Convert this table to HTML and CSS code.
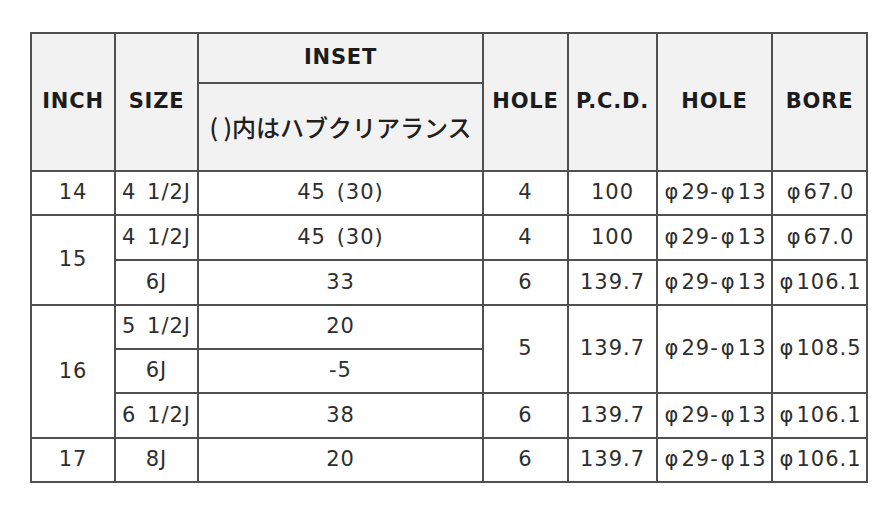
FILE: index.html
```html
<!DOCTYPE html>
<html lang="ja">
<head>
<meta charset="utf-8">
<title>Wheel size table</title>
<link rel="stylesheet" href="styles.css">
</head>
<body>
<div class="wrap">
<table class="spec">
  <colgroup>
    <col class="c-inch"><col class="c-size"><col class="c-inset"><col class="c-hole"><col class="c-pcd"><col class="c-hole2"><col class="c-bore">
  </colgroup>
  <thead>
    <tr class="h1">
      <th rowspan="2">INCH</th>
      <th rowspan="2">SIZE</th>
      <th>INSET</th>
      <th rowspan="2">HOLE</th>
      <th rowspan="2">P.C.D.</th>
      <th rowspan="2">HOLE</th>
      <th rowspan="2">BORE</th>
    </tr>
    <tr class="h2">
      <th class="jp">( )内はハブクリアランス</th>
    </tr>
  </thead>
  <tbody>
    <tr class="r44">
      <td>14</td><td>4 1/2J</td><td>45 (30)</td><td>4</td><td>100</td><td><span class="phi">φ</span>29-<span class="phi">φ</span>13</td><td><span class="phi">φ</span>67.0</td>
    </tr>
    <tr class="r45">
      <td rowspan="2">15</td><td>4 1/2J</td><td>45 (30)</td><td>4</td><td>100</td><td><span class="phi">φ</span>29-<span class="phi">φ</span>13</td><td><span class="phi">φ</span>67.0</td>
    </tr>
    <tr class="r45">
      <td>6J</td><td>33</td><td>6</td><td>139.7</td><td><span class="phi">φ</span>29-<span class="phi">φ</span>13</td><td><span class="phi">φ</span>106.1</td>
    </tr>
    <tr class="r44">
      <td rowspan="3">16</td><td>5 1/2J</td><td>20</td><td rowspan="2">5</td><td rowspan="2">139.7</td><td rowspan="2"><span class="phi">φ</span>29-<span class="phi">φ</span>13</td><td rowspan="2"><span class="phi">φ</span>108.5</td>
    </tr>
    <tr class="r44">
      <td>6J</td><td>-5</td>
    </tr>
    <tr class="r45">
      <td>6 1/2J</td><td>38</td><td>6</td><td>139.7</td><td><span class="phi">φ</span>29-<span class="phi">φ</span>13</td><td><span class="phi">φ</span>106.1</td>
    </tr>
    <tr class="r44">
      <td>17</td><td>8J</td><td>20</td><td>6</td><td>139.7</td><td><span class="phi">φ</span>29-<span class="phi">φ</span>13</td><td><span class="phi">φ</span>106.1</td>
    </tr>
  </tbody>
</table>
</div>
</body>
</html>
```

FILE: styles.css
```css
html, body {
  margin: 0;
  padding: 0;
  background: #ffffff;
}

.wrap {
  padding: 32px 0 0 30px;
}

.spec {
  table-layout: fixed;
  width: 838px;
  border-collapse: separate;
  border-spacing: 0;
  border-top: 2px solid #505050;
  border-left: 2px solid #505050;
  font-family: "DejaVu Sans", Verdana, sans-serif;
  font-size: 21px;
  color: #2e2e2e;
}

.c-inch { width: 84px; }
.c-size { width: 83px; }
.c-inset { width: 285px; }
.c-hole { width: 85px; }
.c-pcd { width: 89px; }
.c-hole2 { width: 115px; }
.c-bore { width: 95px; }

.spec th,
.spec td {
  border-right: 2px solid #505050;
  border-bottom: 2px solid #505050;
  padding: 0;
  text-align: center;
  vertical-align: middle;
  line-height: 1.2;
  white-space: nowrap;
  overflow: visible;
}

.spec th {
  background: #f2f2f2;
  font-weight: bold;
  color: #1c1c1c;
  font-size: 21px;
  letter-spacing: 0.8px;
}

.spec th.jp {
  font-family: "Noto Sans CJK JP", sans-serif;
  font-weight: 500;
  font-size: 24px;
  letter-spacing: 0;
  color: #202020;
}

.spec td {
  background: #ffffff;
  letter-spacing: 1px;
  word-spacing: 3px;
}

.phi {
  font-family: "DejaVu Sans", sans-serif;
  display: inline-block;
  width: 19px;
  text-align: center;
}

.h1 { height: 50px; }
.h2 { height: 88px; }
.r44 { height: 44px; }
.r45 { height: 45px; }
```
